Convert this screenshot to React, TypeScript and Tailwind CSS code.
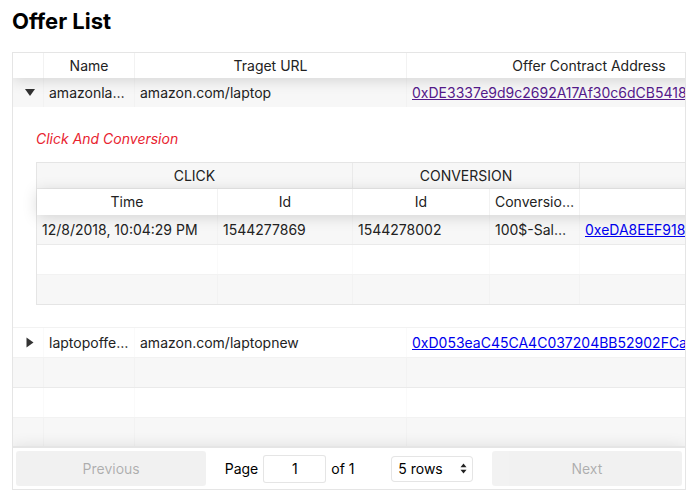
import React from "react";

type Offer = {
  name: string;
  url: string;
  address: string;
  visited?: boolean;
  open?: boolean;
};

const offers: Offer[] = [
  {
    name: "amazonlaptop",
    url: "amazon.com/laptop",
    address: "0xDE3337e9d9c2692A17Af30c6dCB5418aB1E0c2f7",
    visited: true,
    open: true,
  },
  {
    name: "laptopoffer2",
    url: "amazon.com/laptopnew",
    address: "0xD053eaC45CA4C037204BB52902FCa9E1d4C1b8E2",
  },
];

const click = {
  time: "12/8/2018, 10:04:29 PM",
  clickId: "1544277869",
  conversionId: "1544278002",
  conversion: "100$-Sale-Laptop",
  address: "0xeDA8EEF9183b1a4F6d2C7E0a2b4E8F1c",
};

function Expander({ open }: { open?: boolean }) {
  return (
    <div className="w-[31px] shrink-0 h-full flex items-center justify-center pl-[4px] border-r border-black/[0.02]">
      <span
        className={`inline-block w-0 h-0 border-l-[5px] border-r-[5px] border-t-[7px] border-l-transparent border-r-transparent border-t-black/80 ${
          open ? "" : "-rotate-90"
        }`}
      />
    </div>
  );
}

function OfferRow({ offer, odd }: { offer: Offer; odd: boolean }) {
  return (
    <div className={`flex h-[29px] ${odd ? "bg-black/[0.03]" : ""}`}>
      <Expander open={offer.open} />
      <div className="w-[91px] shrink-0 px-[5px] leading-[29px] truncate border-r border-black/[0.02]">
        {offer.name}
      </div>
      <div className="w-[272px] shrink-0 px-[5px] leading-[29px] truncate border-r border-black/[0.02]">
        {offer.url}
      </div>
      <div className="w-[365px] shrink-0 px-[5px] leading-[29px] truncate border-r border-black/[0.02]">
        <a
          href="#"
          className={`underline ${offer.visited ? "text-[#551a8b]" : "text-[#0000ee]"}`}
        >
          {offer.address}
        </a>
      </div>
    </div>
  );
}

function PadRow({ odd, last }: { odd: boolean; last?: boolean }) {
  return (
    <div
      className={`flex ${last ? "h-[28px]" : "h-[30px] border-b border-black/[0.05]"} ${
        odd ? "bg-black/[0.03]" : ""
      }`}
    >
      <div className="w-[31px] shrink-0 border-r border-black/[0.02]" />
      <div className="w-[91px] shrink-0 border-r border-black/[0.02]" />
      <div className="w-[272px] shrink-0 border-r border-black/[0.02]" />
      <div className="w-[365px] shrink-0 border-r border-black/[0.02]" />
    </div>
  );
}

function InnerPadRow({ odd, last }: { odd: boolean; last?: boolean }) {
  return (
    <div
      className={`flex ${last ? "h-[29px]" : "h-[30px] border-b border-black/[0.05]"} ${
        odd ? "bg-black/[0.03]" : ""
      }`}
    >
      <div className="w-[181px] shrink-0 border-r border-black/[0.02]" />
      <div className="w-[135px] shrink-0 border-r border-black/[0.02]" />
      <div className="w-[137px] shrink-0 border-r border-black/[0.02]" />
      <div className="w-[90px] shrink-0 border-r border-black/[0.02]" />
      <div className="w-[200px] shrink-0 border-r border-black/[0.02]" />
    </div>
  );
}

function ClickTable() {
  return (
    <div className="w-max border border-black/10">
      <div className="flex h-[26px] leading-[25px] text-center bg-black/[0.03] border-b border-black/[0.05]">
        <div className="w-[316px] shrink-0 border-r border-black/[0.05]">CLICK</div>
        <div className="w-[227px] shrink-0 border-r border-black/[0.05]">CONVERSION</div>
        <div className="w-[200px] shrink-0" />
      </div>
      <div className="relative z-10 flex h-[26px] leading-[26px] text-center bg-white shadow-[0_2px_15px_0_rgba(0,0,0,0.15)]">
        <div className="w-[181px] shrink-0 px-[5px] truncate border-r border-black/[0.05]">Time</div>
        <div className="w-[135px] shrink-0 px-[5px] truncate border-r border-black/[0.05]">Id</div>
        <div className="w-[137px] shrink-0 px-[5px] truncate border-r border-black/[0.05]">Id</div>
        <div className="w-[90px] shrink-0 px-[5px] truncate border-r border-black/[0.05]">Conversion Type</div>
        <div className="w-[200px] shrink-0" />
      </div>
      <div className="flex h-[30px] leading-[29px] bg-black/[0.03] border-b border-black/[0.05]">
        <div className="w-[181px] shrink-0 px-[5px] truncate border-r border-black/[0.02]">{click.time}</div>
        <div className="w-[135px] shrink-0 px-[5px] truncate border-r border-black/[0.02]">{click.clickId}</div>
        <div className="w-[137px] shrink-0 px-[5px] truncate border-r border-black/[0.02]">{click.conversionId}</div>
        <div className="w-[90px] shrink-0 px-[5px] truncate border-r border-black/[0.02]">{click.conversion}</div>
        <div className="w-[200px] shrink-0 px-[5px] truncate border-r border-black/[0.02]">
          <a href="#" className="underline text-[#0000ee]">
            {click.address}
          </a>
        </div>
      </div>
      <InnerPadRow odd={false} />
      <InnerPadRow odd={true} last />
    </div>
  );
}

export default function App() {
  return (
    <div className="pl-3 pr-[9px] pt-[8px] font-[Inter,'Liberation_Sans',sans-serif] text-[14px] text-[#222]">
      <h2 className="text-[22px] leading-[26px] font-bold text-black">Offer List</h2>

      <div className="mt-[18px] border border-black/10 flex flex-col overflow-hidden">
        <div className="overflow-hidden">
          <div className="w-max min-w-full flex flex-col">
            {/* header */}
            <div className="relative z-10 flex h-[25px] leading-[25px] text-center bg-white shadow-[0_2px_15px_0_rgba(0,0,0,0.15)]">
              <div className="w-[31px] shrink-0 border-r border-black/[0.05]" />
              <div className="w-[91px] shrink-0 px-[5px] truncate border-r border-black/[0.05]">Name</div>
              <div className="w-[272px] shrink-0 px-[5px] truncate border-r border-black/[0.05]">Traget URL</div>
              <div className="w-[365px] shrink-0 px-[5px] truncate border-r border-black/[0.05]">
                Offer Contract Address
              </div>
            </div>

            {/* first offer, expanded */}
            <div className="border-b border-black/[0.05]">
              <OfferRow offer={offers[0]} odd={true} />
              <div className="pl-[23px] pt-[22px] pb-[22px]">
                <p className="italic text-[#e8232f] leading-[20px] mb-[13px]">Click And Conversion</p>
                <ClickTable />
              </div>
            </div>

            {/* second offer */}
            <div className="border-b border-black/[0.05]">
              <OfferRow offer={offers[1]} odd={false} />
            </div>

            <PadRow odd={true} />
            <PadRow odd={false} />
            <PadRow odd={true} last />
          </div>
        </div>

        {/* pagination */}
        <div className="relative z-10 flex p-[3px] border-t-2 border-black/10 bg-white shadow-[0_0_15px_0_rgba(0,0,0,0.1)]">
          <div className="flex-1">
            <button
              disabled
              className="w-full h-[35px] rounded-[3px] bg-black/10 text-black/60 opacity-50 text-[14px]"
            >
              Previous
            </button>
          </div>
          <div className="flex-[1.5] flex items-center justify-around text-black">
            <div className="mx-[10px] flex items-center whitespace-nowrap">
              <span>Page</span>
              <input
                type="text"
                defaultValue="1"
                className="mx-[5px] w-[63px] h-[28px] border border-black/10 rounded-[3px] bg-white text-center outline-none"
              />
              <span>of 1</span>
            </div>
            <div className="mx-[10px] flex items-center justify-between w-[82px] h-[26px] border border-black/10 rounded-[4px] bg-white pl-[6px] pr-[5px]">
              <span>5 rows</span>
              <svg width="7" height="11" viewBox="0 0 7 11">
                <path d="M3.5 0.5 L6.5 4.2 L0.5 4.2 Z" fill="#222" />
                <path d="M3.5 10.5 L6.5 6.8 L0.5 6.8 Z" fill="#222" />
              </svg>
            </div>
          </div>
          <div className="flex-1">
            <button
              disabled
              className="w-full h-[35px] rounded-[3px] bg-black/10 text-black/60 opacity-50 text-[14px]"
            >
              Next
            </button>
          </div>
        </div>
      </div>
    </div>
  );
}
